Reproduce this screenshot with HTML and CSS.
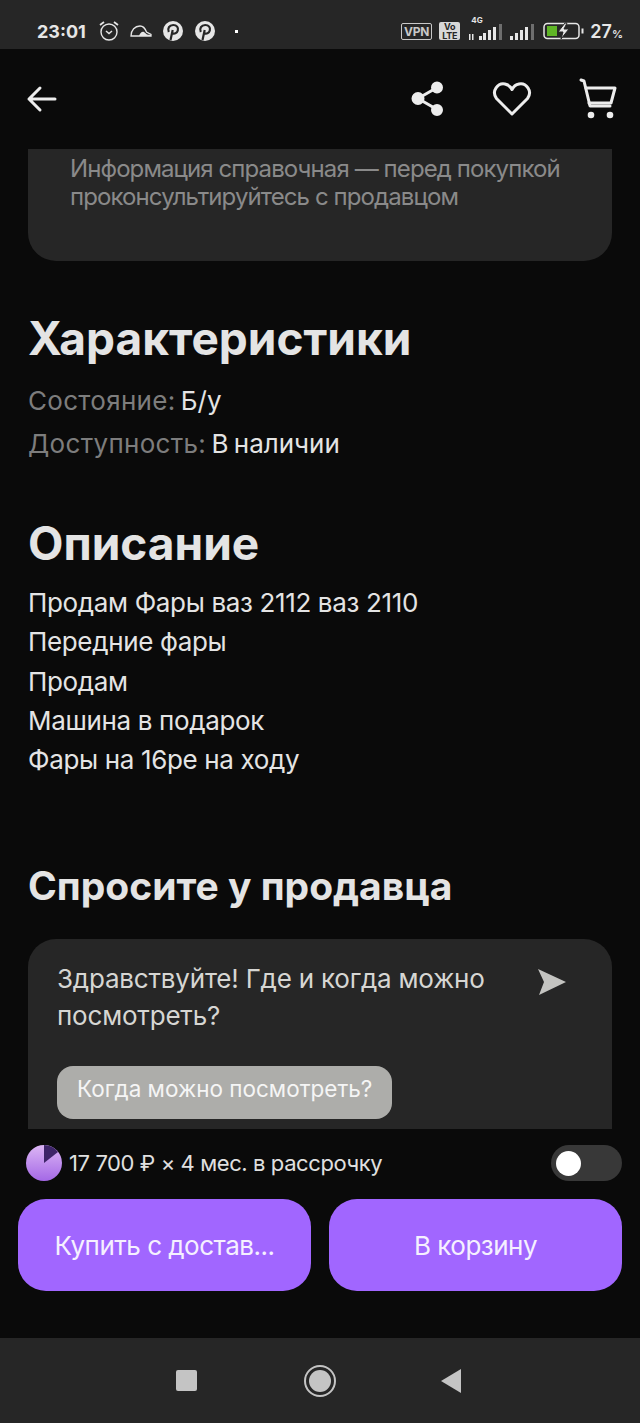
FILE: index.html
```html
<!DOCTYPE html>
<html lang="ru">
<head>
    <meta charset="UTF-8">
    <meta name="viewport" content="width=device-width, initial-scale=1.0">
    <title>Характеристики</title>
    <link rel="stylesheet" href="styles.css">
</head>
<body>
<div class="screen">

    <!-- Status bar -->
    <div class="status">
        <div class="status-left">
            <span class="time">23:01</span>
            <svg class="st-icon" width="22" height="22" viewBox="0 0 22 22" fill="none" stroke="#e6e6e6" stroke-width="1.4">
                <circle cx="11" cy="12" r="8"/>
                <path d="M8 11l3 2.5 3-2.5" stroke-width="1.5"/>
                <path d="M2 5l4-3M20 5l-4-3" stroke-width="1.8"/>
            </svg>
            <svg class="st-icon" width="22" height="14" viewBox="0 0 22 14" fill="none">
                <path d="M1 12c0-6 4-10 9-10 3 0 5 2 6.500 6L21 10.500v1.500z" stroke="#e6e6e6" stroke-width="1.300"/>
                <path d="M9 12c1-3 3-5 5-4l3 2.500 4 .5v1z" fill="#e6e6e6"/>
            </svg>
            <svg class="st-icon pin" width="20" height="20" viewBox="0 0 20 20">
                <circle cx="10" cy="10" r="10" fill="#e6e6e6"/>
                <path d="M7.500 19l2.200-10M5.800 11c-1.700-3.500.6-7 4.400-7 3.600 0 5.400 2.500 4.600 5.500-.7 2.800-3.600 4-5.800 2.500" fill="none" stroke="#262626" stroke-width="2.200"/>
            </svg>
            <svg class="st-icon pin" width="20" height="20" viewBox="0 0 20 20">
                <circle cx="10" cy="10" r="10" fill="#e6e6e6"/>
                <path d="M7.500 19l2.200-10M5.800 11c-1.700-3.500.6-7 4.400-7 3.600 0 5.400 2.500 4.600 5.500-.7 2.800-3.600 4-5.800 2.500" fill="none" stroke="#262626" stroke-width="2.200"/>
            </svg>
            <span class="dot"></span>
        </div>
        <div class="status-right">
            <span class="vpn">VPN</span>
            <span class="volte">Vo<br>LTE</span>
            <span class="net">
                <span class="net-label">4G</span>
                <svg width="34" height="18" viewBox="0 0 34 18" fill="#e6e6e6">
                    <rect x="0" y="10" width="1.500" height="6"/>
                    <rect x="3" y="10" width="1.500" height="6"/>
                    <rect x="10" y="12" width="3" height="4"/>
                    <rect x="14" y="9" width="3" height="7"/>
                    <rect x="19" y="6" width="3" height="10"/>
                    <rect x="24" y="3" width="3" height="13"/>
                    <rect x="30" y="0" width="3" height="16" fill="#6e6e6e"/>
                </svg>
            </span>
            <svg class="bars" width="25" height="18" viewBox="0 0 25 18" fill="#e6e6e6">
                <rect x="0" y="12" width="3" height="4"/>
                <rect x="5" y="9" width="3" height="7"/>
                <rect x="10" y="6" width="3" height="10"/>
                <rect x="15" y="3" width="3" height="13"/>
                <rect x="21" y="0" width="3" height="16" fill="#6e6e6e"/>
            </svg>
            <svg class="batt" width="41" height="18" viewBox="0 0 41 18" fill="none">
                <rect x="1" y="1.500" width="35" height="15" rx="3.500" stroke="#e6e6e6" stroke-width="1.500"/>
                <rect x="4" y="4" width="10" height="10" fill="#5fb526"/>
                <rect x="38.500" y="6.500" width="2" height="5" fill="#e6e6e6"/>
                <path d="M22 1l-7 9h5l-2 7 8-10h-5l3-6z" fill="#e6e6e6" stroke="#262626"/>
            </svg>
            <span class="pct">27<small>%</small></span>
        </div>
    </div>

    <!-- Top bar -->
    <div class="topbar">
        <svg class="back" width="32" height="32" viewBox="0 0 32 32" fill="none" stroke="#ededed" stroke-width="3" stroke-linecap="round" stroke-linejoin="round">
            <path d="M30 17H4M15 6L4 17l11 11"/>
        </svg>
        <div class="top-actions">
            <svg width="34" height="38" viewBox="0 0 34 38" fill="none" stroke="#ededed" stroke-width="3">
                <path d="M27 7L7 18.500 27 30"/>
                <circle cx="26" cy="7.500" r="4.500" fill="#ededed"/>
                <circle cx="7" cy="18.500" r="5" fill="#ededed"/>
                <circle cx="26" cy="30" r="4.500" fill="#ededed"/>
            </svg>
            <svg width="40" height="38" viewBox="0 0 40 38" fill="none" stroke="#ededed" stroke-width="3" stroke-linejoin="round">
                <path d="M20 34L4.500 18.500C-1 11 6 2.500 13 4c3 .6 5.500 2.500 7 5.500 1.500-3 4-4.900 7-5.500 7-1.500 14 7 8.500 14.500z"/>
            </svg>
            <svg width="38" height="42" viewBox="0 0 38 42" fill="none" stroke="#ededed" stroke-width="3" stroke-linejoin="round" stroke-linecap="round">
                <path d="M2 2l3 1 6 25h20"/>
                <path d="M7 10h29l-4 15H10"/>
                <circle cx="12" cy="37" r="3.300" fill="#ededed" stroke="none"/>
                <circle cx="31" cy="37" r="3.300" fill="#ededed" stroke="none"/>
            </svg>
        </div>
    </div>

    <!-- Scrolled content -->
    <div class="content">
        <div class="note">
            <p>Информация справочная — перед покупкой проконсультируйтесь с продавцом</p>
        </div>

        <h2 class="title spec-title">Характеристики</h2>
        <p class="spec"><span class="label">Состояние:</span> Б/у</p>
        <p class="spec"><span class="label">Доступность:</span> В наличии</p>

        <h2 class="title desc-title">Описание</h2>
        <div class="desc">
            Продам Фары ваз 2112 ваз 2110<br>
            Передние фары<br>
            Продам<br>
            Машина в подарок<br>
            Фары на 16ре на ходу
        </div>

        <h3 class="ask-title">Спросите у продавца</h3>
        <div class="ask">
            <div class="ask-row">
                <div class="ask-text">Здравствуйте! Где и когда можно посмотреть?</div>
                <svg width="30" height="28" viewBox="0 0 30 28" fill="#c4c4c1">
                    <path d="M1 1l28 13L2 27l5-13z"/>
                </svg>
            </div>
            <span class="chip">Когда можно посмотреть?</span>
        </div>
    </div>

    <!-- Buy bar -->
    <div class="buybar">
        <div class="credit">
            <div class="credit-info">
                <svg width="36" height="36" viewBox="0 0 36 36">
                    <defs>
                        <linearGradient id="pie" x1="0" y1="0" x2="0" y2="1">
                            <stop offset="0" stop-color="#dcb6f5"/>
                            <stop offset="1" stop-color="#a468e6"/>
                        </linearGradient>
                    </defs>
                    <circle cx="18" cy="18" r="18" fill="url(#pie)"/>
                    <path d="M18 18V0a18 18 0 0 1 14 7z" fill="#3d2468"/>
                </svg>
                <span>17 700 ₽ × 4 мес. в рассрочку</span>
            </div>
            <div class="toggle"><span class="knob"></span></div>
        </div>
        <div class="buttons">
            <button class="buy-btn">Купить с достав...</button>
            <button class="buy-btn">В корзину</button>
        </div>
    </div>

    <!-- Navigation Bar -->
    <div class="navbar">
        <span class="nav-square"></span>
        <span class="nav-circle"><span></span></span>
        <svg class="nav-back" width="22" height="26" viewBox="0 0 22 26" fill="#c4c4c4"><path d="M21 1v24L1 13z"/></svg>
    </div>

</div>
</body>
</html>
```

FILE: styles.css
```css
body {
    margin: 0;
    padding: 0;
    background-color: #0a0a0a;
    font-family: Inter, "Noto Sans", sans-serif;
    color: #e4e4e4;
}
.screen {
    width: 640px;
    height: 1423px;
    display: flex;
    flex-direction: column;
    overflow: hidden;
}
.status {
    height: 49px;
    flex: none;
    background-color: #262626;
    display: flex;
    justify-content: space-between;
    align-items: center;
    padding: 0 17px 0 37px;
    box-sizing: border-box;
}
.status-left, .status-right {
    display: flex;
    align-items: center;
}
.status-left {
    gap: 10px;
    margin-top: 13px;
}
.time {
    font-size: 18px;
    font-weight: 700;
    color: #e6e6e6;
    margin-right: 2px;
}
.pin {
    margin-left: 1.500px;
}
.dot {
    width: 3px;
    height: 3px;
    background-color: #fff;
    margin-left: 10px;
}
.status-right {
    margin-top: 13px;
    gap: 7px;
}
.vpn {
    border: 1.5px solid #c8c8c8;
    border-radius: 2px;
    font-size: 12px;
    font-weight: 700;
    color: #c8c8c8;
    padding: 1px 2px;
    line-height: 13px;
    letter-spacing: -0.2px;
}
.volte {
    background-color: #d8d8d8;
    color: #262626;
    border-radius: 2px;
    font-size: 9px;
    font-weight: 700;
    line-height: 9px;
    padding: 0 3px;
    text-align: center;
    letter-spacing: -0.2px;
}
.net {
    position: relative;
    display: flex;
    margin-top: 4px;
    margin-left: 2px;
}
.net-label {
    position: absolute;
    left: 2px;
    top: -9px;
    font-size: 8px;
    font-weight: 700;
    color: #e6e6e6;
}
.bars {
    margin-top: 4px;
}
.batt {
    margin-left: 1px;
}
.pct {
    font-size: 18px;
    font-weight: 600;
    color: #e6e6e6;
    margin-left: -1px;
}
.pct small {
    font-size: 11px;
}
.topbar {
    height: 100px;
    flex: none;
    display: flex;
    justify-content: space-between;
    align-items: center;
    padding: 0 23px 0 25px;
}
.back {
    margin-top: -2px;
}
.top-actions {
    display: flex;
    align-items: center;
    gap: 47px;
}
.content {
    flex: 1;
    min-height: 0;
    overflow: hidden;
    padding: 0 28px;
}
.note {
    background-color: #262626;
    border-radius: 0 0 28px 28px;
    height: 112px;
    padding: 6px 42px 0;
    box-sizing: border-box;
}
.note p {
    margin: 0 -20px 0 0;
    font-size: 24px;
    line-height: 28px;
    letter-spacing: -0.9px;
    color: #8a8a8a;
}
.title {
    margin: 0;
    font-size: 46px;
    line-height: 54px;
    font-weight: 700;
}
.spec-title {
    margin-top: 50px;
}
.spec {
    margin: 0;
    font-size: 26px;
    line-height: 43px;
    word-spacing: -2px;
}
.spec-title + .spec {
    margin-top: 14px;
}
.label {
    color: #7d7d7d;
    letter-spacing: 0.3px;
}
.desc-title {
    margin-top: 51px;
}
.desc {
    margin-top: 13px;
    font-size: 26px;
    line-height: 39.300px;
    letter-spacing: -0.35px;
}
.ask-title {
    margin: 80px 0 0;
    font-size: 39px;
    line-height: 54px;
    font-weight: 700;
}
.ask {
    margin-top: 26px;
    background-color: #262626;
    border-radius: 28px;
    padding: 21px 29px;
    height: 260px;
    box-sizing: border-box;
}
.ask-row {
    display: flex;
    justify-content: space-between;
    padding-right: 16px;
}
.ask-text {
    width: 440px;
    font-size: 26px;
    line-height: 37px;
    letter-spacing: -0.2px;
    color: #d6d6d3;
}
.ask-row svg {
    margin-top: 8px;
}
.chip {
    display: inline-block;
    margin-top: 32px;
    background-color: #adadaa;
    color: #f5f5f5;
    border-radius: 16px;
    font-size: 22.500px;
    line-height: 46px;
    padding: 0 20px 7px;
}
.buybar {
    height: 209px;
    flex: none;
    padding: 0 18px;
    box-sizing: border-box;
}
.credit {
    display: flex;
    justify-content: space-between;
    align-items: center;
    margin-top: 16px;
    height: 36px;
}
.credit-info {
    display: flex;
    align-items: center;
    gap: 7px;
    padding-left: 8px;
    font-size: 22px;
    letter-spacing: -0.4px;
    color: #e0e0e0;
}
.toggle {
    width: 71px;
    height: 36px;
    background-color: #383838;
    border-radius: 18px;
    display: flex;
    align-items: center;
    padding-left: 5px;
    box-sizing: border-box;
}
.knob {
    width: 25px;
    height: 25px;
    border-radius: 50%;
    background-color: #fff;
}
.buttons {
    display: flex;
    gap: 18px;
    margin-top: 18px;
}
.buy-btn {
    flex: 1;
    height: 92px;
    border: none;
    border-radius: 28px;
    background-color: #a166ff;
    color: #f5f0ff;
    font-family: inherit;
    font-size: 26px;
    letter-spacing: -0.5px;
    cursor: pointer;
}
.navbar {
    height: 85px;
    flex: none;
    background-color: #262626;
    display: flex;
    justify-content: center;
    align-items: center;
    gap: 107px;
    padding-right: 3px;
}
.navbar > * {
    flex: none;
}
.nav-back {
    margin-left: -3px;
}
.nav-square {
    width: 21px;
    height: 21px;
    background-color: #c4c4c4;
    border-radius: 2px;
}
.nav-circle {
    width: 28px;
    height: 28px;
    border: 2px solid #c4c4c4;
    border-radius: 50%;
    display: flex;
    align-items: center;
    justify-content: center;
}
.nav-circle span {
    width: 22px;
    height: 22px;
    border-radius: 50%;
    background-color: #c4c4c4;
}
```
